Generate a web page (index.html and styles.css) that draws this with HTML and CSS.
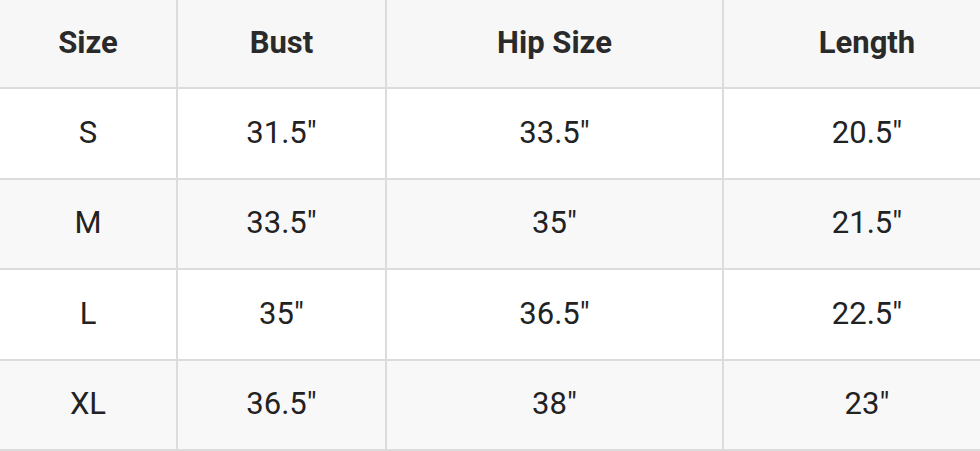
FILE: index.html
```html
<!DOCTYPE html>
<html>
<head>
<meta charset="utf-8">
<link rel="stylesheet" href="styles.css">
</head>
<body>
<div class="chart">
  <div class="cell head">Size</div><div class="cell head">Bust</div><div class="cell head">Hip Size</div><div class="cell head">Length</div>
  <div class="cell">S</div><div class="cell">31.5"</div><div class="cell">33.5"</div><div class="cell">20.5"</div>
  <div class="cell alt">M</div><div class="cell alt">33.5"</div><div class="cell alt">35"</div><div class="cell alt">21.5"</div>
  <div class="cell">L</div><div class="cell">35"</div><div class="cell">36.5"</div><div class="cell">22.5"</div>
  <div class="cell alt">XL</div><div class="cell alt">36.5"</div><div class="cell alt">38"</div><div class="cell alt">23"</div>
</div>
</body>
</html>
```
FILE: styles.css
```css
html, body {
  margin: 0;
  padding: 0;
  background: #ffffff;
  overflow: hidden;
}
.chart {
  display: grid;
  width: 1010px;
  grid-template-columns: 176px 207px 335px 286px;
  grid-template-rows: 87px 88.5px 88.5px 88.5px 88.5px;
  column-gap: 2px;
  row-gap: 2px;
  padding-bottom: 2px;
  background: #dcdcdc;
  font-family: Roboto, "Liberation Sans", sans-serif;
  color: #222222;
}
.cell {
  display: flex;
  align-items: center;
  justify-content: center;
  background: #ffffff;
  font-size: 31px;
  padding-bottom: 2px;
}
.cell.head {
  background: #f7f7f7;
  font-weight: 700;
  color: #2a2a2a;
}
.cell.alt {
  background: #f8f8f8;
}
```
